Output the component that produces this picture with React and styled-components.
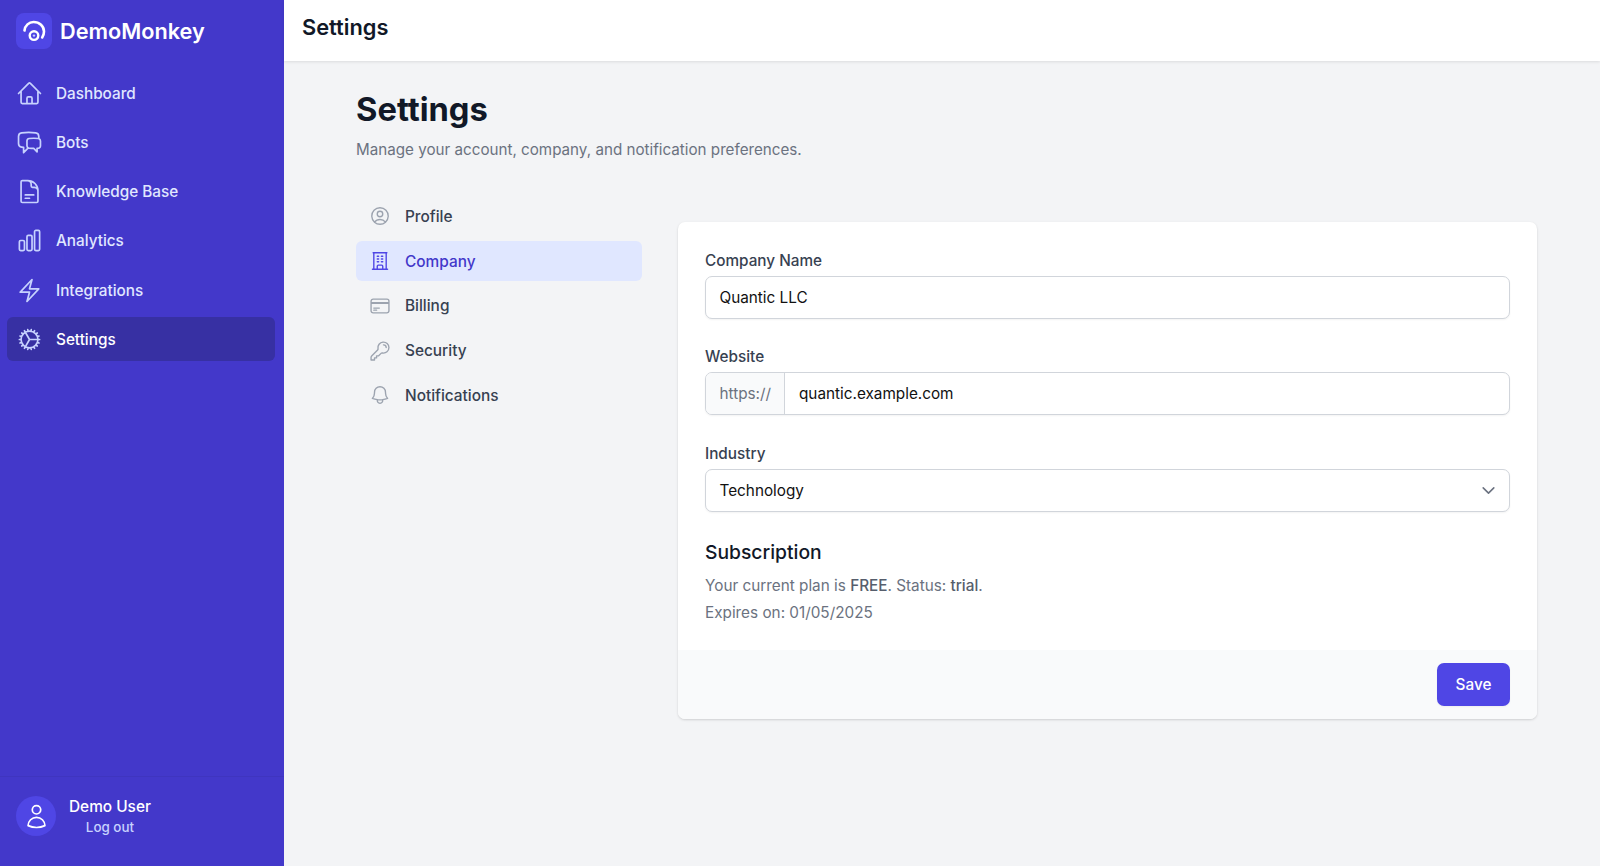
import styled, { createGlobalStyle } from "styled-components";
import {
    HiOutlineHome,
    HiOutlineChatBubbleLeftRight,
    HiOutlineDocumentText,
    HiOutlineChartBar,
    HiOutlineBolt,
    HiOutlineCog,
    HiOutlineUserCircle,
    HiOutlineBuildingOffice,
    HiOutlineCreditCard,
    HiOutlineKey,
    HiOutlineBell,
    HiOutlineUser,
    HiOutlineChevronDown,
} from "react-icons/hi2";

const GlobalStyle = createGlobalStyle`
    * { box-sizing: border-box; }
    html, body { margin: 0; padding: 0; }
    body {
        font-family: Inter, "Liberation Sans", sans-serif;
        background: #f3f4f6;
        color: #111827;
    }
`;

const Shell = styled.div`
    display: flex;
    height: 866px;
    overflow: hidden;
`;

const Sidebar = styled.aside`
    width: 284px;
    flex: none;
    display: flex;
    flex-direction: column;
    background: #4338ca;
`;

const Brand = styled.div`
    height: 61px;
    padding-left: 16px;
    display: flex;
    align-items: center;
    gap: 8px;
    font-size: 21.7px;
    font-weight: 600;
    color: #fff;
`;

const LogoTile = styled.div`
    width: 36px;
    height: 36px;
    border-radius: 8px;
    background: #4f46e5;
    display: flex;
    align-items: center;
    justify-content: center;
`;

const NavList = styled.nav`
    flex: 1;
    padding: 10px 9px 0 7px;
    display: flex;
    flex-direction: column;
    gap: 5.3px;
`;

const NavItem = styled.a`
    height: 44px;
    padding-left: 9px;
    display: flex;
    align-items: center;
    gap: 13px;
    border-radius: 6px;
    font-size: 15.3px;
    font-weight: 450;
    color: ${(p) => (p.$active ? "#fff" : "#e0e7ff")};
    background: ${(p) => (p.$active ? "#3730a3" : "transparent")};
    svg {
        width: 27px;
        height: 27px;
        flex: none;
        color: #c7d2fe;
    }
`;

const UserBar = styled.div`
    height: 90px;
    border-top: 1px solid #3f35bf;
    padding: 19px 16px;
    display: flex;
    gap: 13px;
`;

const Avatar = styled.div`
    width: 40px;
    height: 40px;
    border-radius: 50%;
    background: #4f46e5;
    color: #fff;
    display: flex;
    align-items: center;
    justify-content: center;
    svg {
        width: 27px;
        height: 27px;
    }
`;

const UserText = styled.div`
    display: flex;
    flex-direction: column;
    align-items: center;
`;

const UserName = styled.div`
    font-size: 15.4px;
    font-weight: 450;
    line-height: 22px;
    color: #fff;
`;

const LogOut = styled.div`
    font-size: 13.4px;
    font-weight: 450;
    line-height: 19px;
    color: #c7d2fe;
`;

const Content = styled.div`
    flex: 1;
    min-width: 0;
    display: flex;
    flex-direction: column;
`;

const TopBar = styled.header`
    height: 61px;
    flex: none;
    padding: 0 0 8px 18px;
    display: flex;
    align-items: center;
    background: #fff;
    box-shadow: 0 1px 3px rgba(0, 0, 0, 0.1);
    font-size: 21.8px;
    font-weight: 600;
    color: #111827;
`;

const Main = styled.main`
    flex: 1;
    padding: 26px 63px 0 72px;
`;

const PageTitle = styled.h1`
    margin: 0;
    font-size: 32.7px;
    line-height: 44px;
    font-weight: 700;
    color: #111827;
`;

const PageSub = styled.p`
    margin: 8px 0 0;
    font-size: 15.2px;
    line-height: 22px;
    color: #6b7280;
`;

const Columns = styled.div`
    margin-top: 35px;
    display: flex;
    gap: 36px;
    align-items: flex-start;
`;

const SubNav = styled.nav`
    width: 286px;
    flex: none;
    display: flex;
    flex-direction: column;
    gap: 4.2px;
`;

const SubItem = styled.a`
    height: 40.6px;
    padding-left: 13px;
    display: flex;
    align-items: center;
    gap: 14px;
    border-radius: 6px;
    font-size: 15.4px;
    font-weight: 450;
    color: ${(p) => (p.$active ? "#4338ca" : "#374151")};
    background: ${(p) => (p.$active ? "#e0e7ff" : "transparent")};
    svg {
        width: 22px;
        height: 22px;
        flex: none;
        color: ${(p) => (p.$active ? "#4f46e5" : "#9ca3af")};
    }
`;

const Card = styled.section`
    flex: 1;
    margin-top: 25.7px;
    background: #fff;
    border-radius: 7px;
    box-shadow: 0 1px 3px rgba(0, 0, 0, 0.1), 0 1px 2px rgba(0, 0, 0, 0.06);
    overflow: hidden;
`;

const CardBody = styled.div`
    padding: 28px 27px 23.6px;
    display: flex;
    flex-direction: column;
`;

const Field = styled.div`
    margin-bottom: 27.6px;
`;

const Label = styled.div`
    font-size: 15.3px;
    font-weight: 450;
    line-height: 22px;
    color: #374151;
    margin-bottom: 4px;
`;

const Input = styled.div`
    height: 43px;
    padding: 0 13.5px;
    display: flex;
    align-items: center;
    justify-content: space-between;
    border: 1px solid #d1d5db;
    border-radius: 7px;
    box-shadow: 0 1px 2px rgba(0, 0, 0, 0.05);
    font-size: 15.3px;
    color: #111;
    background: #fff;
    svg {
        width: 17px;
        height: 17px;
        color: #6b7280;
        stroke-width: 2.2;
        margin-right: -1px;
    }
`;

const UrlGroup = styled(Input)`
    padding: 0;
    overflow: hidden;
    justify-content: flex-start;
`;

const UrlPrefix = styled.div`
    width: 79px;
    height: 100%;
    padding-left: 13.5px;
    display: flex;
    align-items: center;
    background: #f9fafb;
    border-right: 1px solid #d1d5db;
    color: #6b7280;
`;

const UrlValue = styled.div`
    padding-left: 14px;
`;

const SectionTitle = styled.h3`
    margin: 0.8px 0 0;
    font-size: 19.3px;
    line-height: 24px;
    font-weight: 500;
    color: #111827;
`;

const PlanText = styled.div`
    margin-top: 7.4px;
    font-size: 15.3px;
    line-height: 27.2px;
    color: #6b7280;
`;

const Strong = styled.span`
    font-weight: 450;
    color: #565e6c;
`;

const CardFooter = styled.div`
    height: 69px;
    padding: 13px 27px;
    display: flex;
    justify-content: flex-end;
    background: #f9fafb;
`;

const SaveButton = styled.button`
    width: 73px;
    height: 43px;
    border: 0;
    border-radius: 7px;
    background: #4f46e5;
    color: #fff;
    font-family: inherit;
    font-size: 15.3px;
    font-weight: 500;
    box-shadow: 0 1px 2px rgba(0, 0, 0, 0.05);
`;

const Logo = () => (
    <svg width="28" height="28" viewBox="0 0 28 28" fill="none" stroke="#fff">
        <path d="M4.5 13.5C5 8.5 9 5 13.5 5c6 0 10.5 4.2 10.5 9.5 0 2.4-.7 4.4-1.8 6" strokeWidth="2.6" strokeLinecap="round" />
        <circle cx="14" cy="18.6" r="4.3" strokeWidth="2.4" />
        <circle cx="14" cy="18.6" r="1.2" fill="#c7d2fe" stroke="none" />
    </svg>
);

const mainNav = [
    { label: "Dashboard", icon: HiOutlineHome },
    { label: "Bots", icon: HiOutlineChatBubbleLeftRight },
    { label: "Knowledge Base", icon: HiOutlineDocumentText },
    { label: "Analytics", icon: HiOutlineChartBar },
    { label: "Integrations", icon: HiOutlineBolt },
    { label: "Settings", icon: HiOutlineCog, active: true },
];

const settingsNav = [
    { label: "Profile", icon: HiOutlineUserCircle },
    { label: "Company", icon: HiOutlineBuildingOffice, active: true },
    { label: "Billing", icon: HiOutlineCreditCard },
    { label: "Security", icon: HiOutlineKey },
    { label: "Notifications", icon: HiOutlineBell },
];

const App = () => {
    return (
        <>
            <GlobalStyle />
            <Shell>
                <Sidebar>
                    <Brand>
                        <LogoTile>
                            <Logo />
                        </LogoTile>
                        DemoMonkey
                    </Brand>
                    <NavList>
                        {mainNav.map((item) => (
                            <NavItem key={item.label} $active={item.active}>
                                <item.icon />
                                {item.label}
                            </NavItem>
                        ))}
                    </NavList>
                    <UserBar>
                        <Avatar>
                            <HiOutlineUser />
                        </Avatar>
                        <UserText>
                            <UserName>Demo User</UserName>
                            <LogOut>Log out</LogOut>
                        </UserText>
                    </UserBar>
                </Sidebar>
                <Content>
                    <TopBar>Settings</TopBar>
                    <Main>
                        <PageTitle>Settings</PageTitle>
                        <PageSub>Manage your account, company, and notification preferences.</PageSub>
                        <Columns>
                            <SubNav>
                                {settingsNav.map((item) => (
                                    <SubItem key={item.label} $active={item.active}>
                                        <item.icon />
                                        {item.label}
                                    </SubItem>
                                ))}
                            </SubNav>
                            <Card>
                                <CardBody>
                                    <Field>
                                        <Label>Company Name</Label>
                                        <Input>Quantic LLC</Input>
                                    </Field>
                                    <Field>
                                        <Label>Website</Label>
                                        <UrlGroup>
                                            <UrlPrefix>https://</UrlPrefix>
                                            <UrlValue>quantic.example.com</UrlValue>
                                        </UrlGroup>
                                    </Field>
                                    <Field>
                                        <Label>Industry</Label>
                                        <Input>
                                            Technology
                                            <HiOutlineChevronDown />
                                        </Input>
                                    </Field>
                                    <SectionTitle>Subscription</SectionTitle>
                                    <PlanText>
                                        Your current plan is <Strong>FREE</Strong>. Status: <Strong>trial</Strong>.
                                        <br />
                                        Expires on: 01/05/2025
                                    </PlanText>
                                </CardBody>
                                <CardFooter>
                                    <SaveButton>Save</SaveButton>
                                </CardFooter>
                            </Card>
                        </Columns>
                    </Main>
                </Content>
            </Shell>
        </>
    );
};

export default App;
